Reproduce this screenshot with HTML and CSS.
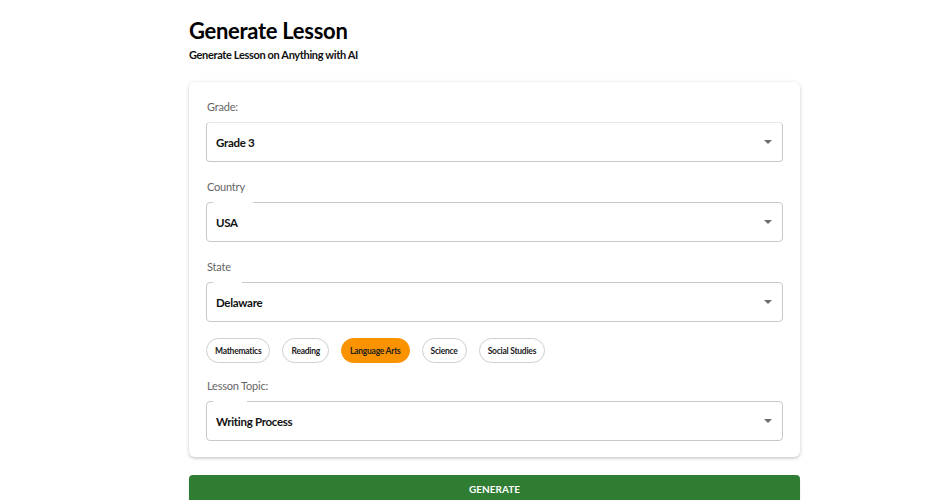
FILE: index.html
```html
<!DOCTYPE html>
<html>
<head>
<meta charset="utf-8">
<link rel="stylesheet" href="styles.css">
</head>
<body>
<main class="page">
  <h1 class="title">Generate Lesson</h1>
  <p class="subtitle">Generate Lesson on Anything with AI</p>
  <section class="card">
    <div class="field">
      <div class="label">Grade:</div>
      <div class="select notch-faint">
        <span class="value">Grade 3</span>
        <span class="caret"></span>
      </div>
    </div>
    <div class="field">
      <div class="label">Country</div>
      <div class="select notch-country">
        <span class="value">USA</span>
        <span class="caret"></span>
      </div>
    </div>
    <div class="field">
      <div class="label">State</div>
      <div class="select notch-state">
        <span class="value">Delaware</span>
        <span class="caret"></span>
      </div>
    </div>
    <div class="chips">
      <span class="chip">Mathematics</span>
      <span class="chip">Reading</span>
      <span class="chip active">Language Arts</span>
      <span class="chip">Science</span>
      <span class="chip">Social Studies</span>
    </div>
    <div class="field">
      <div class="label">Lesson Topic:</div>
      <div class="select notch-topic">
        <span class="value">Writing Process</span>
        <span class="caret"></span>
      </div>
    </div>
  </section>
  <button class="generate">GENERATE</button>
</main>
</body>
</html>
```

FILE: styles.css
```css
* { box-sizing: border-box; }
html, body { margin: 0; padding: 0; background: #fff; }
body {
  font-family: "Lato", "Open Sans", sans-serif;
  color: #111;
}
.page {
  width: 611px;
  margin: 0 auto;
  padding-top: 17px;
  position: relative;
  left: 20px;
}
.title {
  margin: 0;
  font-size: 22px;
  font-weight: 700;
  line-height: 28px;
  letter-spacing: -0.3px;
  color: #000;
}
.subtitle {
  margin: 3px 0 0;
  font-size: 11px;
  font-weight: 700;
  line-height: 14px;
  letter-spacing: -0.35px;
  color: #111;
}
.card {
  margin-top: 20px;
  background: #fff;
  border-radius: 6px;
  box-shadow: 0 1px 4px rgba(0,0,0,0.18), 0 2px 2px rgba(0,0,0,0.06);
  padding: 18px 17px 16px 17px;
}
.field { margin-bottom: 18px; }
.field:last-child { margin-bottom: 0; }
.label {
  font-size: 11px;
  color: #666;
  line-height: 14px;
  margin: 0 0 8px 1px;
  letter-spacing: -0.2px;
}
.select {
  position: relative;
  height: 40px;
  border: 1px solid #c8c8c8;
  border-radius: 4px;
  display: flex;
  align-items: center;
  padding: 0 10px 0 9px;
}
.select::before {
  content: "";
  position: absolute;
  top: -1px;
  left: 6px;
  height: 1px;
  background: #fff;
}
.notch-faint { border-top-color: #e6e6e6; }
.notch-country::before { width: 40px; }
.notch-state::before { width: 29px; }
.notch-topic::before { width: 34px; }
.value {
  font-size: 11.5px;
  font-weight: 700;
  color: #111;
  letter-spacing: -0.3px;
}
.caret {
  margin-left: auto;
  width: 0;
  height: 0;
  border-left: 4px solid transparent;
  border-right: 4px solid transparent;
  border-top: 4px solid #6b6b6b;
}
.chips {
  display: flex;
  gap: 12px;
  margin: -2px 0 16px 0;
}
.chip {
  height: 25px;
  padding: 0 8px;
  border: 1px solid #cfcfcf;
  border-radius: 13px;
  font-size: 8.5px;
  font-weight: 700;
  color: #222;
  display: flex;
  align-items: center;
  letter-spacing: -0.25px;
}
.chip.active {
  background: #fb9200;
  border-color: #fb9200;
}
.generate {
  display: block;
  width: 100%;
  margin-top: 18px;
  height: 32px;
  padding: 0 0 4px;
  border: none;
  border-radius: 4px;
  background: #2e7d32;
  color: #fff;
  font-family: inherit;
  font-size: 10px;
  font-weight: 700;
  box-shadow: 0 2px 2px rgba(0,0,0,0.15);
}
```
